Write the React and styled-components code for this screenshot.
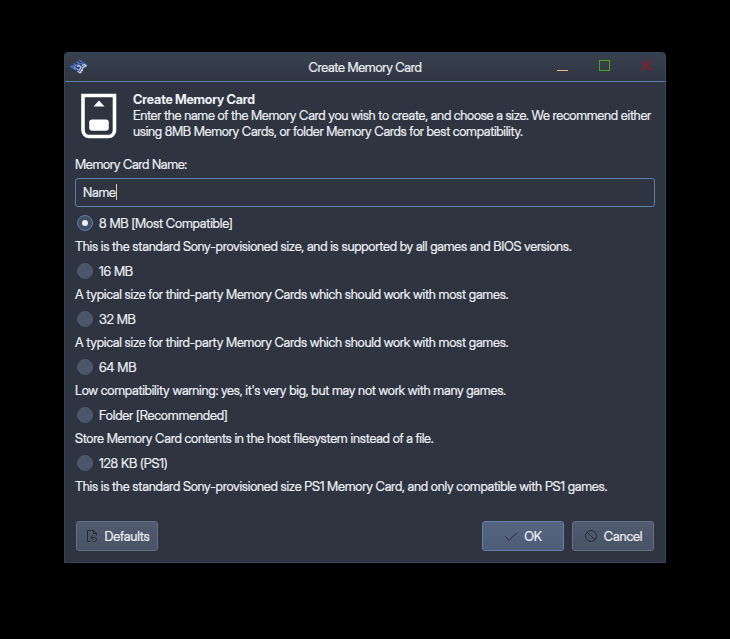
import React, { useState } from "react";
import styled, { createGlobalStyle } from "styled-components";

const GlobalStyle = createGlobalStyle`
  * { box-sizing: border-box; }
  body {
    margin: 0;
    background: #000;
    color: #eceff4;
    font: 13px/16px "Inter Display", Inter, "Liberation Sans", sans-serif;
    font-variation-settings: "opsz" 32;
    letter-spacing: -0.275px;
    -webkit-text-stroke: 0.2px currentColor;
  }
`;

const Desktop = styled.main`
  height: 639px;
  padding: 52px 64px 0;
  background: #000;
  overflow: hidden;
`;

const Dialog = styled.section`
  width: 602px;
  height: 511px;
  display: flex;
  flex-direction: column;
  background: #2e3440;
  border: 1px solid #34465c;
  border-radius: 4px 4px 0 0;
  overflow: hidden;
`;

const TitleBar = styled.header`
  height: 29px;
  flex: none;
  display: grid;
  grid-template-columns: 110px 1fr 110px;
  align-items: center;
  background: linear-gradient(#394150, #2f3541);
  border-bottom: 1px solid #5e81ac;
`;

const LogoSlot = styled.div`
  height: 16px;
  padding-left: 5px;
  svg { display: block; }
`;

const Title = styled.h1`
  margin: 0;
  text-align: center;
  font-size: 13px;
  font-weight: 400;
  letter-spacing: -0.35px;
`;

const WindowControls = styled.div`
  display: flex;
  gap: 31px;
  padding-left: 2px;
  margin-top: -2px;
  svg { display: block; }
`;

const Content = styled.div`
  flex: 1;
  display: flex;
  flex-direction: column;
  padding: 9px 10px 11px;
`;

const Intro = styled.div`
  display: flex;
  height: 48px;
  svg { flex: none; margin-right: 10px; }
`;

const IntroText = styled.p`
  margin: 0;
  white-space: nowrap;
  letter-spacing: -0.32px;
`;

const IntroHeading = styled.strong`
  display: block;
  font-weight: 700;
  letter-spacing: -0.22px;
  -webkit-text-stroke: 0;
`;

const FieldLabel = styled.label`
  margin-top: 17px;
  letter-spacing: -0.35px;
`;

const NameField = styled.div`
  height: 29px;
  margin-top: 6px;
  padding: 0 7px 2px;
  display: flex;
  align-items: center;
  border: 1px solid #5e81ac;
  border-radius: 3px;
`;

const Caret = styled.span`
  width: 1px;
  height: 16px;
  background: #d8ccb4;
`;

const Options = styled.div`
  margin-top: 8px;
`;

const Option = styled.div`
  height: 48px;
`;

const OptionChoice = styled.label`
  height: 16px;
  display: flex;
  align-items: center;
  gap: 6px;
  padding-left: 2px;
  letter-spacing: -0.22px;
`;

const Radio = styled.span`
  width: 16px;
  height: 16px;
  display: flex;
  align-items: center;
  justify-content: center;
  border-radius: 50%;
  border: 1px solid ${(p) => (p.$checked ? "#5e81ac" : "#4f5a6d")};
  background: ${(p) => (p.$checked ? "#434f63" : "#4c566a")};
  &::after {
    content: "";
    width: 6px;
    height: 6px;
    border-radius: 50%;
    background: ${(p) => (p.$checked ? "#eceff4" : "transparent")};
  }
`;

const Description = styled.p`
  margin: 7px 0 0;
  white-space: nowrap;
`;

const Footer = styled.footer`
  display: flex;
  gap: 8px;
  margin-top: auto;
  padding: 0 1px;
`;

const Button = styled.button`
  width: 82px;
  height: 30px;
  padding: 0 1px 0 0;
  display: flex;
  align-items: center;
  justify-content: center;
  gap: 5px;
  margin-right: ${(p) => (p.$leading ? "auto" : "0")};
  border: 1px solid ${(p) => (p.$primary ? "#6381a9" : "#667083")};
  border-radius: 3px;
  background: ${(p) =>
    p.$primary ? "linear-gradient(#556580, #4e5d77)" : "linear-gradient(#505b6f, #495366)"};
  color: #eceff4;
  font: inherit;
  font-variation-settings: inherit;
  letter-spacing: -0.18px;
`;

const AppLogo = () => (
  <svg width="18" height="16" viewBox="0 0 18 16" fill="none" strokeWidth="1.4">
    <path d="M3.500 4.500 6 6 1 7.500 6 11M6.500 2.500 9.500 4.500 7 6M9 1l3.500 2.500-2 1.500M13.500 4l3.500 2.500" stroke="#4575ca" />
    <path d="M5.500 7.500 4.500 8.500 8.500 11" stroke="#6c96e8" />
    <path d="m7 7.500 2-1 2 1.500-2 3.500M12 6.500l2-1 2 1.500-3 1.500-2 3.500 2-1M7.500 12l2.500 2 1.500-1" stroke="#b3c7f4" />
  </svg>
);

const CardIcon = () => (
  <svg width="48" height="48" viewBox="0 0 48 48">
    <path d="M8 4.500H39.500V39.500a6 6 0 0 1-6 6H14a6 6 0 0 1-6-6Z" fill="none" stroke="#fff" strokeWidth="3.600" />
    <path d="m24 9.500 5.500 6h-11Z" fill="#fff" />
    <rect x="14.200" y="28.500" width="19.600" height="11.300" rx="3" fill="#fff" />
  </svg>
);

const MinimizeIcon = () => (
  <svg width="11" height="12"><path d="M0 11h11v-1H0Z" fill="#ebbd75" /></svg>
);
const MaximizeIcon = () => (
  <svg width="11" height="12"><rect x=".5" y=".5" width="10" height="10" fill="none" stroke="#4fa50d" /></svg>
);
const CloseIcon = () => (
  <svg width="11" height="12"><path d="M.5.5 10.500 10.500M10.500.5.5 10.500" stroke="#a51024" strokeWidth="1.200" /></svg>
);

const DefaultsIcon = () => (
  <svg width="16" height="16" fill="none" stroke="#252a34">
    <path d="M7 13.500H3.500v-11h6l3 3v2M9.500 2.500v3h3M9 7 7 9.500 9 12M7.500 9.500h3a2 2 0 0 1 0 4H9" />
  </svg>
);
const CheckIcon = () => (
  <svg width="16" height="16" fill="none" stroke="#252a34"><path d="m2.500 8.500 3.500 4 8-8" /></svg>
);
const CancelIcon = () => (
  <svg width="16" height="16" fill="none" stroke="#252a34">
    <circle cx="8" cy="8" r="5.500" /><path d="m4 4 8 8" />
  </svg>
);

const sizes = [
  ["8 MB [Most Compatible]", "This is the standard Sony-provisioned size, and is supported by all games and BIOS versions."],
  ["16 MB", "A typical size for third-party Memory Cards which should work with most games."],
  ["32 MB", "A typical size for third-party Memory Cards which should work with most games."],
  ["64 MB", "Low compatibility warning: yes, it's very big, but may not work with many games."],
  ["Folder [Recommended]", "Store Memory Card contents in the host filesystem instead of a file."],
  ["128 KB (PS1)", "This is the standard Sony-provisioned size PS1 Memory Card, and only compatible with PS1 games."],
];

export default function App() {
  const [selected, setSelected] = useState(0);
  return (
    <Desktop>
      <GlobalStyle />
      <Dialog>
        <TitleBar>
          <LogoSlot><AppLogo /></LogoSlot>
          <Title>Create Memory Card</Title>
          <WindowControls><MinimizeIcon /><MaximizeIcon /><CloseIcon /></WindowControls>
        </TitleBar>
        <Content>
          <Intro>
            <CardIcon />
            <IntroText>
              <IntroHeading>Create Memory Card</IntroHeading>
              Enter the name of the Memory Card you wish to create, and choose a size. We recommend either<br />
              using 8MB Memory Cards, or folder Memory Cards for best compatibility.
            </IntroText>
          </Intro>
          <FieldLabel>Memory Card Name:</FieldLabel>
          <NameField>Name<Caret /></NameField>
          <Options>
            {sizes.map(([name, description], i) => (
              <Option key={name}>
                <OptionChoice onClick={() => setSelected(i)}>
                  <Radio $checked={i === selected} />
                  {name}
                </OptionChoice>
                <Description>{description}</Description>
              </Option>
            ))}
          </Options>
          <Footer>
            <Button $leading><DefaultsIcon />Defaults</Button>
            <Button $primary><CheckIcon />OK</Button>
            <Button><CancelIcon />Cancel</Button>
          </Footer>
        </Content>
      </Dialog>
    </Desktop>
  );
}
